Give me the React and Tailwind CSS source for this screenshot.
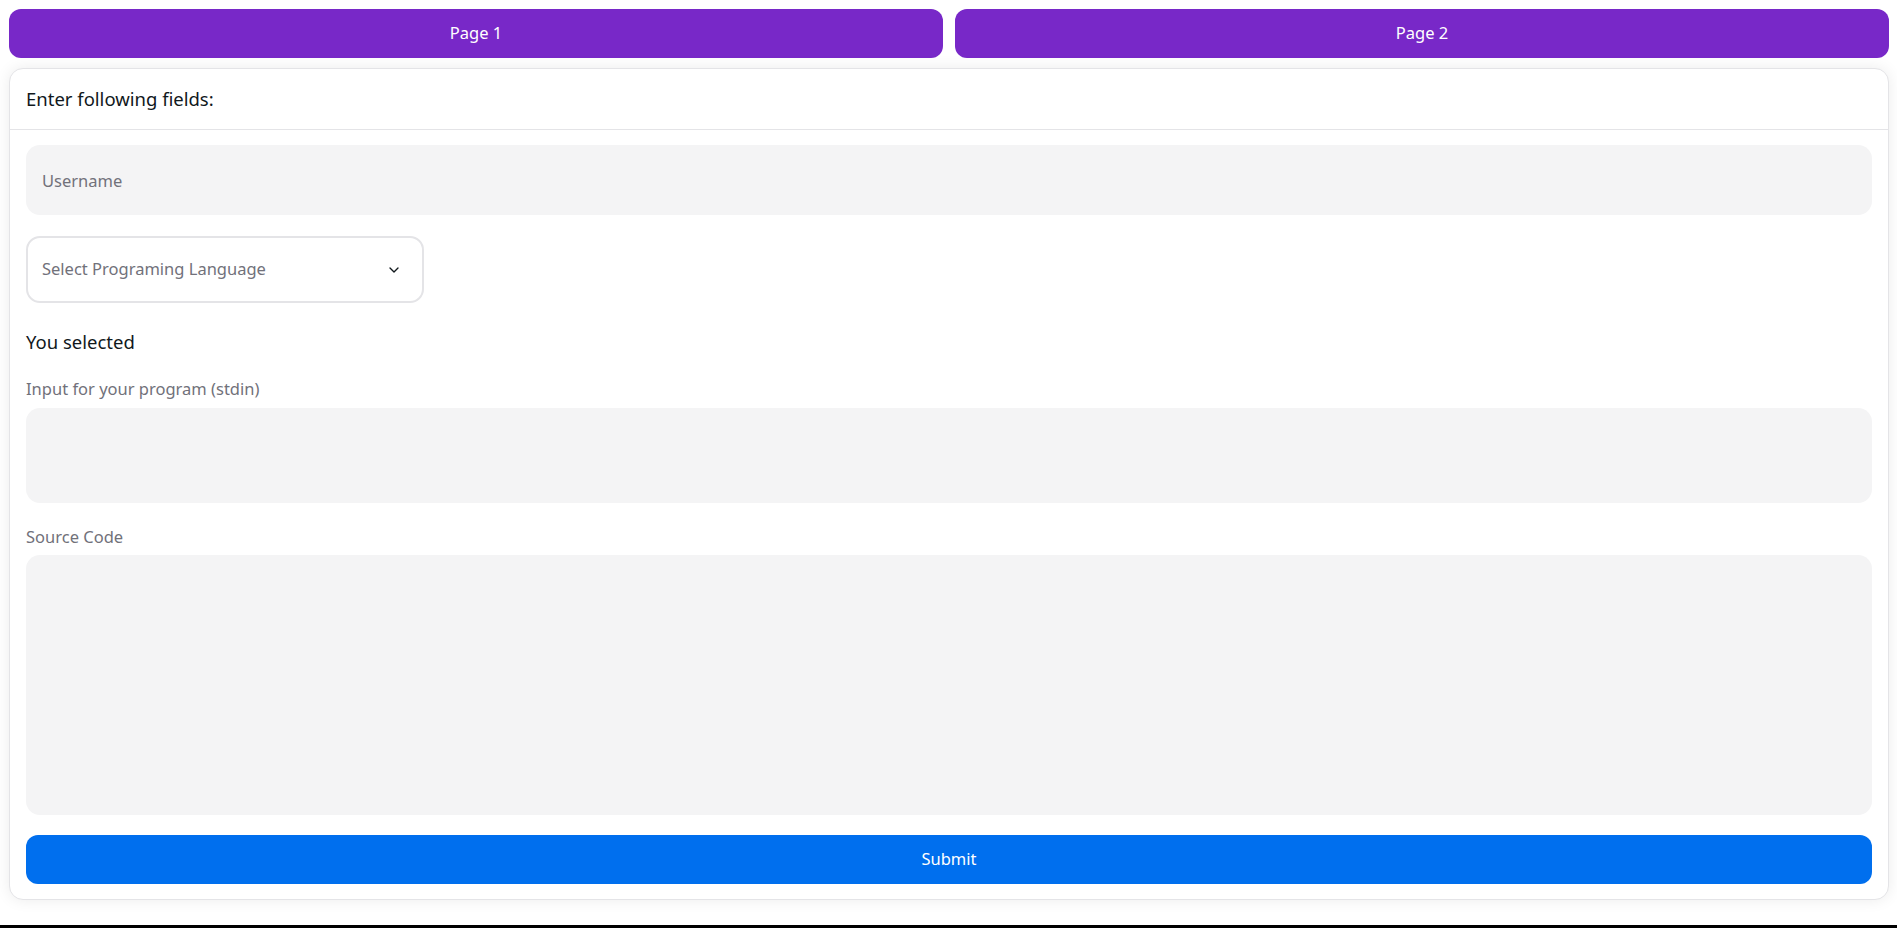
import { ChevronDown } from "lucide-react";

const App = () => {
  return (
    <div className="min-h-[928px] flex flex-col bg-white font-['Noto_Sans',sans-serif] text-[#11181c]">
      {/* page switcher */}
      <div className="flex gap-3 pl-[9px] pr-2 pt-[9px]">
        <button className="flex-1 h-[49px] rounded-xl bg-[#7828c8] text-white text-[16.5px]">
          Page 1
        </button>
        <button className="flex-1 h-[49px] rounded-xl bg-[#7828c8] text-white text-[16.5px]">
          Page 2
        </button>
      </div>

      {/* form card */}
      <div className="mt-[10px] ml-[9px] mr-2 rounded-[14px] border border-[#e4e4e7] bg-white shadow-[0_0_15px_rgba(0,0,0,0.08)]">
        <div className="h-[61px] px-4 flex items-center text-[18.5px] border-b border-[#e4e4e7]">
          Enter following fields:
        </div>

        <div className="flex flex-col px-4 pt-[15px] pb-[15px]">
          <input
            placeholder="Username"
            className="h-[70px] rounded-[14px] bg-[#f4f4f5] px-4 text-[16.5px] placeholder:text-[#71717a] outline-none"
          />

          <button className="mt-[21px] w-[398px] h-[67px] rounded-[14px] border-2 border-[#e4e4e7] px-[14px] flex items-center justify-between text-[16.5px] text-[#71717a]">
            <span>Select Programing Language</span>
            <ChevronDown className="size-4 text-[#11181c] mr-[6px]" strokeWidth={2} />
          </button>

          <p className="mt-[25px] text-[18.5px] leading-[28px]">You selected</p>

          <label className="mt-[21px] text-[16.5px] leading-[24px] text-[#71717a]">
            Input for your program (stdin)
          </label>
          <textarea className="mt-[7px] h-[95px] rounded-[14px] bg-[#f4f4f5] resize-none outline-none" />

          <label className="mt-[22px] text-[16.5px] leading-[24px] text-[#71717a]">
            Source Code
          </label>
          <textarea className="mt-[6px] h-[260px] rounded-[14px] bg-[#f4f4f5] resize-none outline-none" />

          <button className="mt-[20px] h-[49px] rounded-xl bg-[#006fee] text-white text-[16.5px]">
            Submit
          </button>
        </div>
      </div>

      <div className="flex-1" />
      <div className="h-[3px] bg-black" />
    </div>
  );
};

export default App;
